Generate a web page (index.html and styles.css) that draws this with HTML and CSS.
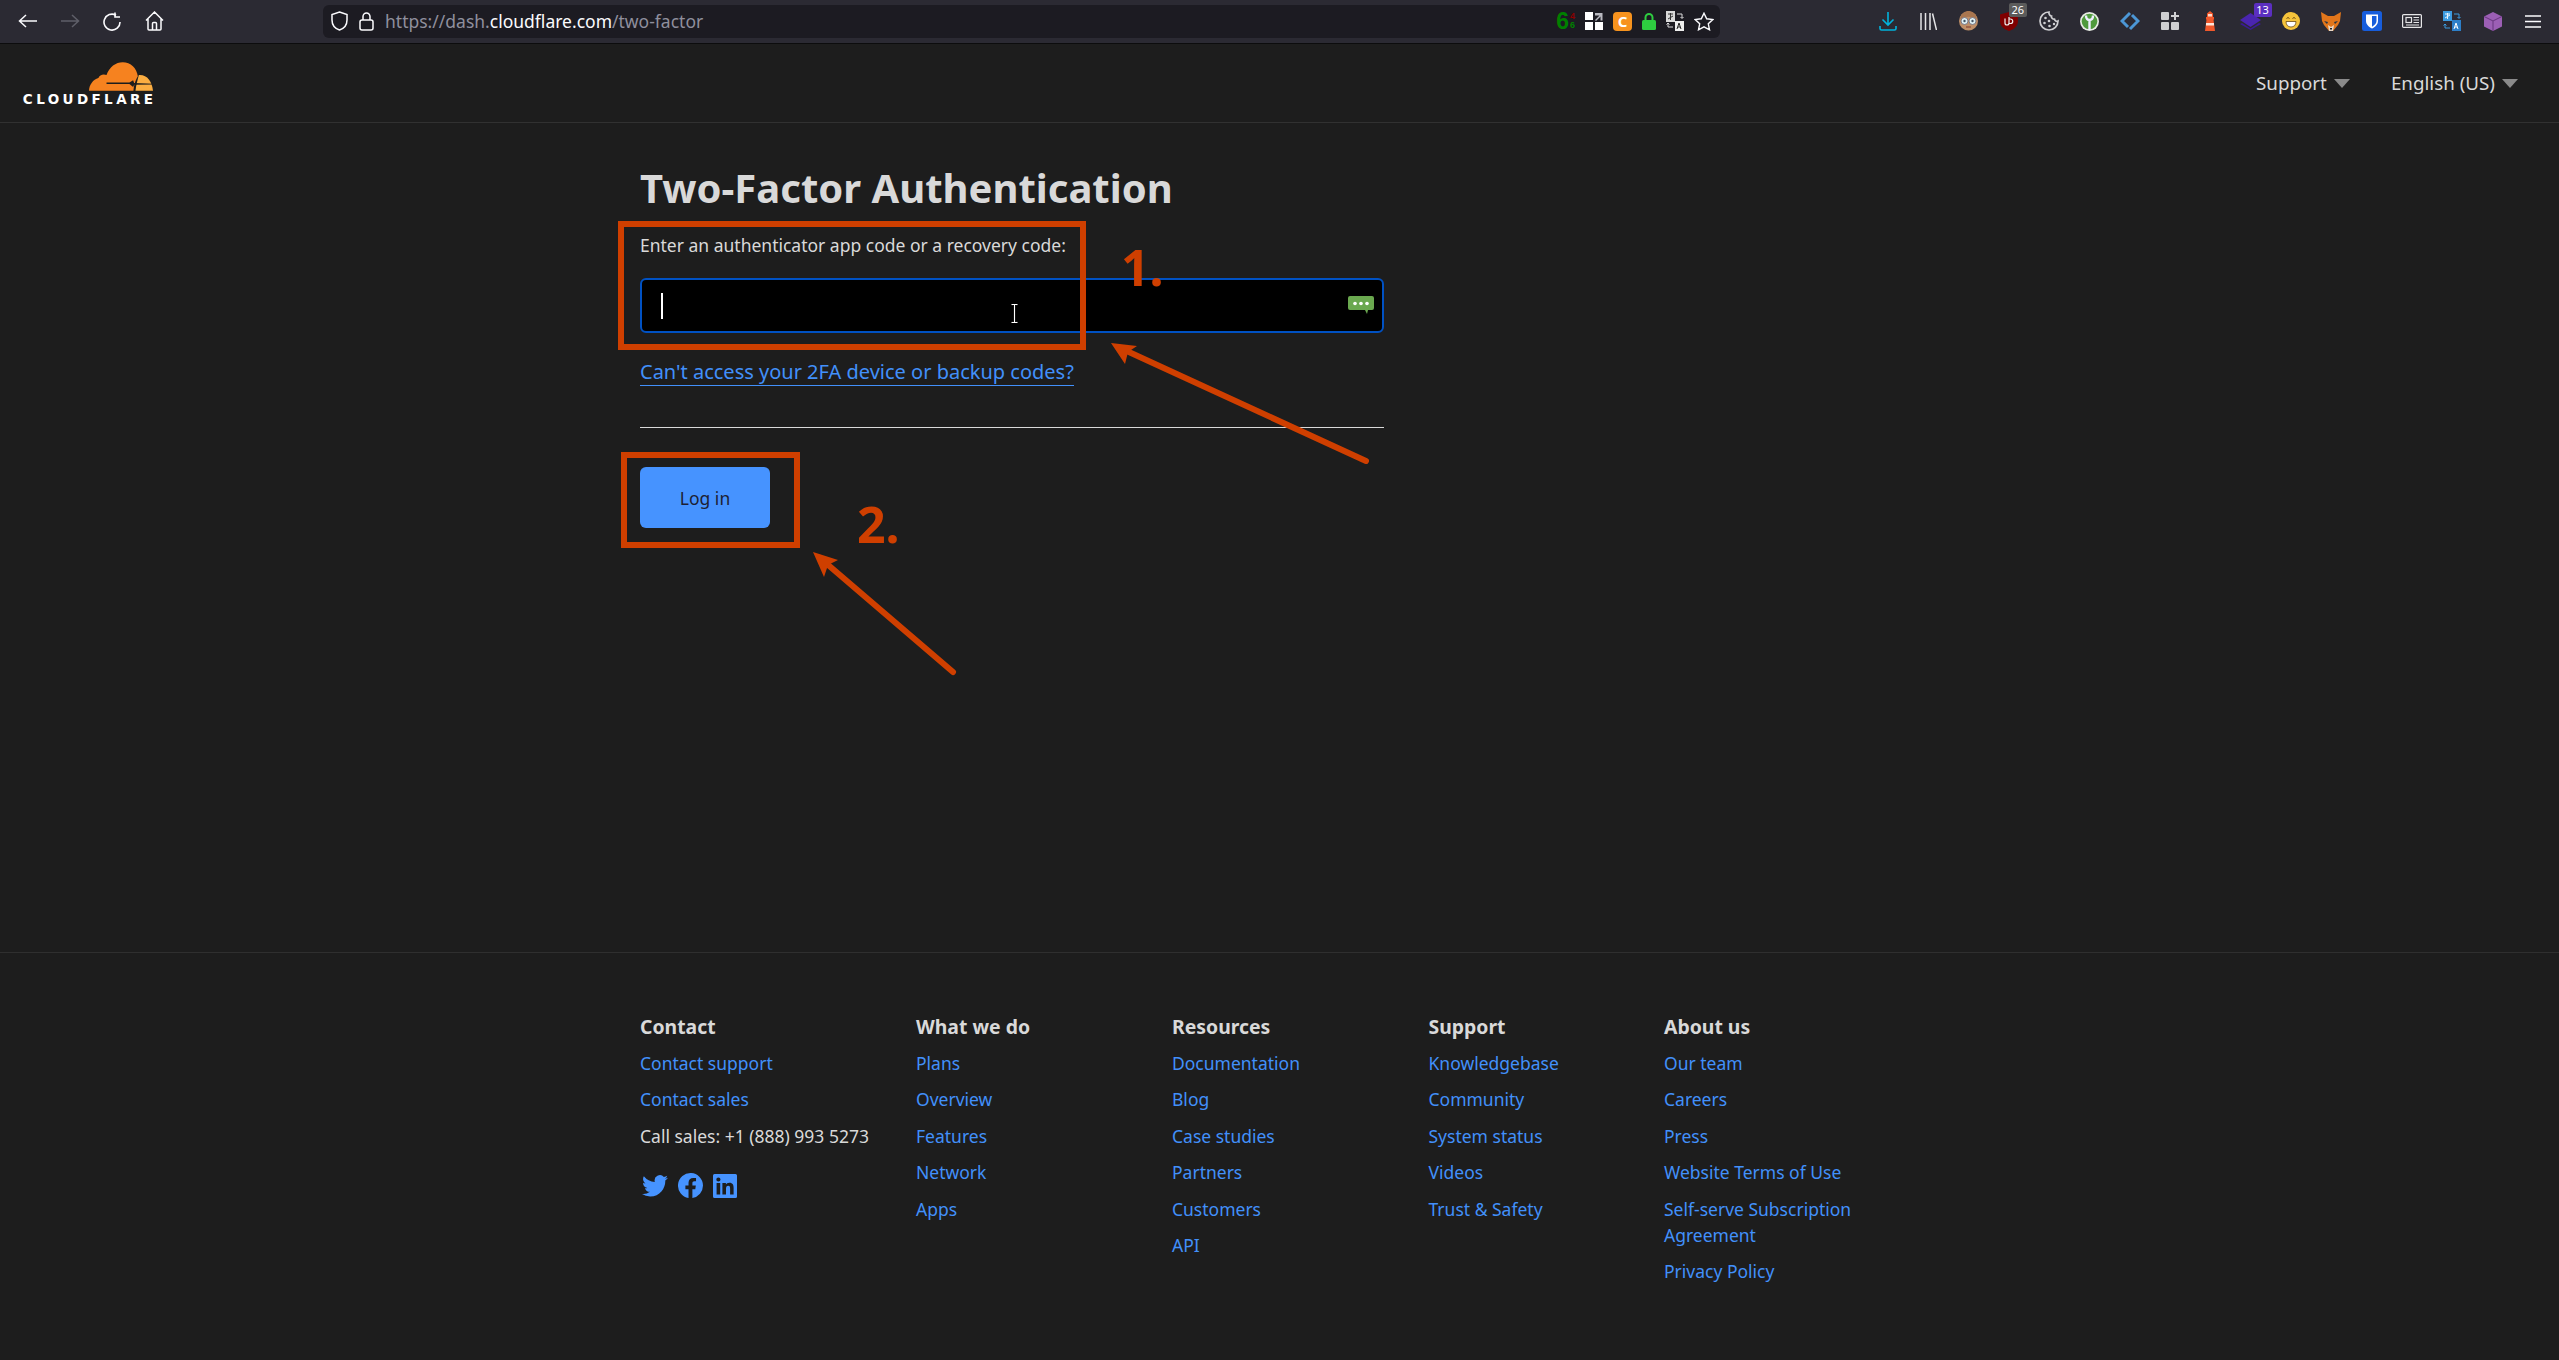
FILE: index.html
```html
<!DOCTYPE html>
<html lang="en">
<head>
    <meta charset="UTF-8">
    <title>Cloudflare - Two-Factor Authentication</title>
    <link rel="stylesheet" href="styles.css">
</head>

<body>
    <!-- Browser toolbar -->
    <div class="toolbar">
        <div class="nav-btns">
            <span class="slot"><svg width="20" height="14" viewBox="0 0 20 14" fill="none" stroke="#fbfbfe" stroke-width="1.5"><path d="M8 1 1.5 7 8 13M1.5 7H19"/></svg></span>
            <span class="slot"><svg width="20" height="14" viewBox="0 0 20 14" fill="none" stroke="#5f5f69" stroke-width="1.5"><path d="M12 1 18.5 7 12 13M18.5 7H1"/></svg></span>
            <span class="slot"><svg width="20" height="19" viewBox="0 0 20 19" fill="none" stroke="#fbfbfe" stroke-width="1.6"><path d="M14 3.2A8 8 0 1 0 18 10"/><path d="M13 .5V5H18" stroke-width="1.6"/></svg></span>
            <span class="slot"><svg width="19" height="20" viewBox="0 0 19 20" fill="none" stroke="#fbfbfe" stroke-width="1.5"><path d="M1 9.5 9.5 1 18 9.5M3 8V18a1 1 0 0 0 1 1H15a1 1 0 0 0 1-1V8M7.5 19V12.5a1 1 0 0 1 1-1H10.500a1 1 0 0 1 1 1V19"/></svg></span>
        </div>

        <div class="urlbar">
            <svg class="url-shield" width="17" height="20" viewBox="0 0 17 20" fill="none" stroke="#fbfbfe" stroke-width="1.5"><path d="M8.500 1 16 3.500V9c0 5-3 8.500-7.500 10C4 17.500 1 14 1 9V3.500Z"/></svg>
            <svg class="url-lock" width="15" height="19" viewBox="0 0 15 19" fill="none" stroke="#fbfbfe" stroke-width="1.5"><rect x="1" y="8" width="13" height="10" rx="2"/><path d="M4 8V4.500a3.500 3.500 0 0 1 7 0V8"/></svg>
            <span class="url-text">https://dash.<b>cloudflare.com</b>/two-factor</span>
            <div class="url-actions">
                <span class="site-score">6<span class="score-small"><i>4</i><i>6</i></span></span>
                <svg width="18" height="18" viewBox="0 0 18 18" fill="#fff"><rect width="8" height="8"/><rect y="10" width="8" height="8"/><rect x="10" y="10" width="8" height="8"/><path d="M10 1h7.500v7.500h-2V4.500L11 9 10 8l4.500-4.500H10Z" fill="#b9b9c0"/></svg>
                <span class="c-badge">C</span>
                <svg width="14" height="17" viewBox="0 0 14 17"><path d="M3.500 8V4.500a3.500 3.500 0 0 1 7 0V8" fill="none" stroke="#2ecc40" stroke-width="2"/><rect y="7" width="14" height="10" rx="1.500" fill="#2ecc40"/></svg>
                <svg width="18" height="20" viewBox="0 0 18 20"><rect width="9" height="11" fill="#d8d8d8"/><rect x="9" y="10" width="9" height="10" fill="#eee"/><path d="M2 3h5M4.500 2v7M2 8l5-3" stroke="#333" fill="none"/><path d="M11 18l2-6 2 6M12 16h2" stroke="#222" fill="none"/><path d="M11 3h5v4M14.500 6l1.500 1.500L17.500 6M7 16H2v-4M.5 13.500 2 12l1.500 1.500" stroke="#ddd" fill="none"/></svg>
                <svg width="20" height="19" viewBox="0 0 20 19" fill="none" stroke="#fbfbfe" stroke-width="1.4"><path d="M10 1.200 12.700 6.800 18.800 7.600 14.300 11.800 15.500 17.800 10 14.900 4.500 17.800 5.700 11.800 1.200 7.600 7.300 6.800Z"/></svg>
            </div>
        </div>

        <div class="ext-icons">
            <span class="slot"><svg width="18" height="19" viewBox="0 0 18 19" fill="none" stroke="#00b3dc" stroke-width="1.600"><path d="M9 0V13M3.500 7.500 9 13l5.500-5.500M1 14v2.500A1.500 1.500 0 0 0 2.500 18h13a1.500 1.500 0 0 0 1.500-1.500V14"/></svg></span>
            <span class="slot"><svg width="17" height="17" viewBox="0 0 17 17" fill="none" stroke="#e4e4e6" stroke-width="1.500"><path d="M1 0V17M5.500 0V17M10 0V17M12.500 .5 16.500 17"/></svg></span>
            <span class="slot"><svg width="19" height="20" viewBox="0 0 19 20"><circle cx="9.500" cy="10" r="9.500" fill="#bf8f68"/><path d="M1 8C2 2 6 0 9.500 0S17 2 18 8C13 5 6 5 1 8Z" fill="#a9764f"/><circle cx="5.500" cy="10" r="3.500" fill="#dff0f4" stroke="#667" stroke-width=".8"/><circle cx="13.500" cy="10" r="3.500" fill="#dff0f4" stroke="#667" stroke-width=".8"/><circle cx="5.500" cy="10" r="1.200" fill="#456"/><circle cx="13.500" cy="10" r="1.200" fill="#456"/><path d="M7 16h5" stroke="#8a4a3a" stroke-width="1.200"/></svg></span>
            <span class="slot"><svg width="18" height="19" viewBox="0 0 18 19"><path d="M9 0 18 2.500V9c0 5-4 8.500-9 10-5-1.500-9-5-9-10V2.500Z" fill="#800000"/><path d="M5 6.500V11a2 2 0 0 0 4 0V6.500M9 5v6.500h1.500a2.200 2.200 0 0 0 0-4.500H9" fill="none" stroke="#eee" stroke-width="1.200"/></svg><span class="badge badge-grey">26</span></span>
            <span class="slot"><svg width="20" height="20" viewBox="0 0 20 20" fill="none" stroke="#cfcfd2" stroke-width="1.700"><path d="M10 1a9 9 0 1 0 9 9c-1.500.8-3.200-.2-3.500-1.800C14 8.500 12 7 12.500 5.200 11 5 9.500 3 10 1Z"/><g fill="#cfcfd2" stroke="none"><circle cx="6.500" cy="7" r="1.300"/><circle cx="5.500" cy="12" r="1.300"/><circle cx="10" cy="10" r="1.300"/><circle cx="10.500" cy="15" r="1.300"/><circle cx="15" cy="13" r="1.200"/></g></svg></span>
            <span class="slot"><svg width="19" height="19" viewBox="0 0 19 19"><circle cx="9.500" cy="9.500" r="9.500" fill="#e8ece4"/><circle cx="9.500" cy="9.500" r="7.800" fill="#4f9a3c"/><path d="M6 3.500C6 7 8 8 9.500 8S13 7 13 3.500M9.500 8V18" fill="none" stroke="#eef" stroke-width="2.400"/></svg></span>
            <span class="slot"><svg width="20" height="20" viewBox="0 0 20 20" fill="none" stroke="#4c97d6" stroke-width="3"><path d="M10 2 2 10l6 6M10 18l8-8-6-6"/></svg></span>
            <span class="slot"><svg width="18" height="18" viewBox="0 0 18 18" fill="#cfcfd2"><rect width="8" height="8" rx="1"/><rect y="10" width="8" height="8" rx="1"/><rect x="10" y="10" width="8" height="8" rx="1"/><path d="M13 0h2v3h3v2h-3v3h-2V5h-3V3h3Z"/></svg></span>
            <span class="slot"><svg width="14" height="20" viewBox="0 0 14 20"><path d="M7 0 10 2.500V6H11V8.500H10.500L12 20H2L3.500 8.500H3V6H4V2.500Z" fill="#f1582b"/><rect x="5" y="3" width="4" height="2.500" fill="#ffd9c9"/><rect x="3" y="12" width="8" height="2.500" fill="#ffe6da"/></svg></span>
            <span class="slot"><svg width="21" height="17" viewBox="0 0 21 17" fill="#3b1a96"><path d="M10.500 0 21 7 10.500 14 0 7Z" fill="#4a25b0"/><path d="M2 10 10.500 15.500 19 10 21 11 10.500 17 0 11Z"/></svg><span class="badge badge-purple">13</span></span>
            <span class="slot"><svg width="18" height="18" viewBox="0 0 18 18"><circle cx="9" cy="9" r="9" fill="#f5c33b"/><path d="M4 9.500H14C14 13 12 15 9 15S4 13 4 9.500Z" fill="#fff" stroke="#6b4a12" stroke-width=".8"/><path d="M4.500 6.500Q6 4.500 7.500 6.500M10.500 6.500Q12 4.500 13.500 6.500" fill="none" stroke="#6b4a12" stroke-width="1"/></svg></span>
            <span class="slot"><svg width="20" height="19" viewBox="0 0 20 19"><path d="M0 0 7 4H13L20 0 19 9 17 13 12 19H8L3 13 1 9Z" fill="#e2761b"/><path d="M7 13 10 15 13 13 12 19H8Z" fill="#e8d8c8"/><path d="M3 9 7 10 6 12ZM17 9 13 10 14 12Z" fill="#233447"/><path d="M9 16h2v1.500H9Z" fill="#222"/></svg></span>
            <span class="slot"><svg width="20" height="20" viewBox="0 0 20 20"><rect width="20" height="20" rx="2.500" fill="#175ddc"/><path d="M4 3.500H16V10C16 13.500 13 16 10 17.500 7 16 4 13.500 4 10Z" fill="#fff"/><path d="M10 5H14.500V10C14.500 12.500 12.500 14.200 10 15.700Z" fill="#175ddc"/></svg></span>
            <span class="slot"><svg width="20" height="14" viewBox="0 0 20 14" fill="none" stroke="#e6e6e8" stroke-width="1.200"><rect x=".6" y=".6" width="18.800" height="12.800" rx="1"/><rect x="4" y="3.500" width="5.500" height="5" /><path d="M11.500 3.500H17M11.500 6H17M11.500 8.500H17M4 11H17"/></svg></span>
            <span class="slot"><svg width="18" height="20" viewBox="0 0 18 20"><rect width="9" height="10" fill="#3c9be0"/><rect x="9" y="9" width="9" height="11" fill="#2d7fc9"/><path d="M2 3h5M4.500 2v6M2 7l5-3" stroke="#e8f4ff" fill="none"/><path d="M11 18l2-6 2 6M12 16h2" stroke="#fff" fill="none"/><path d="M11 3h5v4M14.500 6l1.500 1.500L17.500 6M7 17H2v-4M.5 14.500 2 13l1.500 1.500" stroke="#3c9be0" fill="none"/></svg></span>
            <span class="slot"><svg width="18" height="19" viewBox="0 0 18 19"><path d="M9 0 18 4.500V14.500L9 19 0 14.500V4.500Z" fill="#9c5fb5"/><path d="M0 4.500 9 9 18 4.500M9 9V19" fill="none" stroke="#6c3a82" stroke-width="1.100"/></svg></span>
            <span class="slot"><svg width="16" height="13" viewBox="0 0 16 13" fill="none" stroke="#fbfbfe" stroke-width="1.500"><path d="M0 1H16M0 6.500H16M0 12H16"/></svg></span>
        </div>
    </div>

    <!-- Dashboard header -->
    <header class="topbar">
        <a class="logo" href="#">
            <svg class="logo-cloud" width="64" height="29" viewBox="0 0 190 85">
                <path d="M0 85C1 66 12 52 28 47 31 38 42 34 52 38 60 14 80 0 100 0 124 0 142 18 145 42 140 52 134 62 132 85Z" fill="#f6821f"/>
                <path d="M148 38C172 36 187 56 190 85H138C140 68 144 52 148 38Z" fill="#fbad41"/>
                <path d="M52 60H120L131 54 134 62 190 64V66L134 67 131 74 120 65H52Z" fill="#1d1d1d"/>
            </svg>
            <span class="logo-word">CLOUDFLARE</span>
        </a>
        <nav class="topbar-menu">
            <a href="#">Support<span class="caret-down"></span></a>
            <a href="#">English (US)<span class="caret-down"></span></a>
        </nav>
    </header>

    <!-- Login form -->
    <main class="content">
        <h1>Two-Factor Authentication</h1>
        <form class="twofa-form">
            <label for="code">Enter an authenticator app code or a recovery code:</label>
            <div class="input-wrap">
                <input id="code" type="text">
                <span class="text-caret"></span>
                <svg class="ibeam" width="7" height="19" viewBox="0 0 7 19" fill="none" stroke="#fff" stroke-width="1"><path d="M.5 .5H6.500M.5 18.500H6.500M3.500 .5V18.500" stroke="#111" stroke-width="3"/><path d="M.5 .5H6.500M.5 18.500H6.500M3.500 .5V18.500"/></svg>
                <svg class="pw-icon" width="26" height="18" viewBox="0 0 26 18"><path d="M2 0H24a2 2 0 0 1 2 2V12a2 2 0 0 1-2 2H20L19 18 17 14H2a2 2 0 0 1-2-2V2A2 2 0 0 1 2 0Z" fill="#6aa84f"/><g fill="#fff"><circle cx="7" cy="7.500" r="1.800"/><circle cx="13" cy="7.500" r="1.800"/><circle cx="19" cy="7.500" r="1.800"/></g></svg>
            </div>
            <a class="help-link" href="#">Can't access your 2FA device or backup codes?</a>
            <hr>
            <button class="login-btn" type="button">Log in</button>
        </form>
    </main>

    <!-- Footer -->
    <footer class="site-footer">
        <div class="footer-cols">
            <div>
                <h3>Contact</h3>
                <ul>
                    <li><a href="#">Contact support</a></li>
                    <li><a href="#">Contact sales</a></li>
                    <li>Call sales: +1 (888) 993 5273</li>
                </ul>
                <div class="social">
                    <svg width="26" height="22" viewBox="0 0 24 20" fill="#4693ff"><path d="M24 2.400a10 10 0 0 1-2.800.8A5 5 0 0 0 23.300.500a10 10 0 0 1-3.100 1.200A4.900 4.900 0 0 0 11.800 6.200 14 14 0 0 1 1.700 1 4.900 4.900 0 0 0 3.200 7.600 4.900 4.900 0 0 1 1 7v.100A4.900 4.900 0 0 0 4.900 11.900a5 5 0 0 1-2.200.1A4.900 4.900 0 0 0 7.300 15.400 9.900 9.900 0 0 1 0 17.400 14 14 0 0 0 7.500 19.600C16.600 19.600 21.500 12 21.500 5.500V4.900A10 10 0 0 0 24 2.400Z"/></svg>
                    <svg width="25" height="25" viewBox="0 0 24 24" fill="#4693ff"><path d="M24 12a12 12 0 1 0-13.900 11.900V15.500H7.100V12h3V9.400c0-3 1.800-4.700 4.500-4.700 1.300 0 2.700.2 2.700.2v3h-1.500c-1.500 0-2 .9-2 1.900V12h3.300l-.5 3.500h-2.800v8.400A12 12 0 0 0 24 12Z"/></svg>
                    <svg width="24" height="24" viewBox="0 0 24 24" fill="#4693ff"><path d="M1.500 0H22.500A1.500 1.500 0 0 1 24 1.500V22.500A1.500 1.500 0 0 1 22.500 24H1.500A1.500 1.500 0 0 1 0 22.500V1.500A1.500 1.500 0 0 1 1.500 0ZM3.600 9V20.400H7.200V9ZM5.400 3.400a2.100 2.100 0 1 0 0 4.200 2.100 2.100 0 0 0 0-4.200ZM9.400 9V20.400H13V14.700c0-1.500.3-3 2.200-3s1.900 1.700 1.900 3.100v5.600h3.500V14.100c0-3.100-.7-5.400-4.300-5.400-1.700 0-2.900.9-3.400 1.800V9Z"/></svg>
                </div>
            </div>
            <div>
                <h3>What we do</h3>
                <ul>
                    <li><a href="#">Plans</a></li>
                    <li><a href="#">Overview</a></li>
                    <li><a href="#">Features</a></li>
                    <li><a href="#">Network</a></li>
                    <li><a href="#">Apps</a></li>
                </ul>
            </div>
            <div>
                <h3>Resources</h3>
                <ul>
                    <li><a href="#">Documentation</a></li>
                    <li><a href="#">Blog</a></li>
                    <li><a href="#">Case studies</a></li>
                    <li><a href="#">Partners</a></li>
                    <li><a href="#">Customers</a></li>
                    <li><a href="#">API</a></li>
                </ul>
            </div>
            <div>
                <h3>Support</h3>
                <ul>
                    <li><a href="#">Knowledgebase</a></li>
                    <li><a href="#">Community</a></li>
                    <li><a href="#">System status</a></li>
                    <li><a href="#">Videos</a></li>
                    <li><a href="#">Trust &amp; Safety</a></li>
                </ul>
            </div>
            <div>
                <h3>About us</h3>
                <ul>
                    <li><a href="#">Our team</a></li>
                    <li><a href="#">Careers</a></li>
                    <li><a href="#">Press</a></li>
                    <li><a href="#">Website Terms of Use</a></li>
                    <li><a href="#">Self-serve Subscription Agreement</a></li>
                    <li><a href="#">Privacy Policy</a></li>
                </ul>
            </div>
        </div>
    </footer>

    <!-- Red annotations drawn over the page -->
    <div class="mark mark-one"></div>
    <div class="mark mark-two"></div>
    <div class="mark-num num-one">1.</div>
    <div class="mark-num num-two">2.</div>
    <svg class="mark-arrows" width="2559" height="1360" viewBox="0 0 2559 1360">
        <path d="M1366 461 1118 347" stroke="#cf3f00" stroke-width="6" stroke-linecap="round"/>
        <path d="M1111 343 1137 346 1128 352 1125 364Z" fill="#cf3f00"/>
        <path d="M953 672 820 558" stroke="#cf3f00" stroke-width="6" stroke-linecap="round"/>
        <path d="M813 552 838 560 828 565 824 577Z" fill="#cf3f00"/>
    </svg>
</body>
</html>
```

FILE: styles.css
```css
/* Reset */
* {
    margin: 0;
    padding: 0;
    box-sizing: border-box;
}

body {
    position: relative;
    font-family: "Noto Sans", sans-serif;
    font-size: 17.5px;
    line-height: 1.5;
    background-color: #1d1d1d;
    color: #d9d9d9;
    min-height: 1360px;
    overflow: hidden;
}

a {
    color: #4290fa;
    text-decoration: none;
}

ul {
    list-style: none;
}

/* Browser toolbar */
.toolbar {
    display: flex;
    align-items: center;
    height: 44px;
    padding: 0 6px 1px 7px;
    background-color: #2b2a33;
    border-bottom: 1px solid #0c0c0d;
}

.nav-btns {
    display: flex;
    width: 167px;
}

.nav-btns .slot {
    flex: none;
    width: 42.200px;
}

.slot {
    position: relative;
    display: flex;
    align-items: center;
    justify-content: center;
    height: 34px;
}

.urlbar {
    display: flex;
    align-items: center;
    width: 1397px;
    height: 33px;
    margin-left: 149px;
    padding: 0 6px 0 8px;
    background-color: #1c1b22;
    border-radius: 6px;
}

.url-lock {
    margin-left: 11px;
}

.url-text {
    margin-left: 11px;
    font-size: 17.500px;
    line-height: 33px;
    color: #8f8f9d;
    white-space: nowrap;
}

.url-text b {
    font-weight: 400;
    color: #fbfbfe;
}

.url-actions {
    display: flex;
    align-items: center;
    gap: 10px;
    margin-left: auto;
}

.site-score {
    display: flex;
    align-items: center;
    font-family: "Liberation Sans", sans-serif;
    font-size: 23px;
    font-weight: bold;
    line-height: 1;
    color: #008000;
}

.score-small {
    display: flex;
    flex-direction: column;
    margin-left: 1px;
    font-size: 9px;
}

.score-small i {
    font-style: normal;
}

.score-small i:first-child {
    color: #8b0000;
}

.c-badge {
    width: 19px;
    height: 19px;
    font-size: 15px;
    font-weight: bold;
    line-height: 19px;
    text-align: center;
    color: #fff;
    background-color: #f7931e;
    border-radius: 4px;
}

.ext-icons {
    display: flex;
    margin-left: auto;
}

.ext-icons .slot {
    width: 40.300px;
}

.badge {
    position: absolute;
    top: -1px;
    left: 20px;
    width: 18px;
    height: 14px;
    font-size: 11px;
    line-height: 14px;
    text-align: center;
    color: #fff;
    border-radius: 2px;
}

.badge-grey {
    background-color: #5b5b5b;
}

.badge-purple {
    left: 23px;
    background-color: #5b2fc0;
}

/* Dashboard header */
.topbar {
    display: flex;
    justify-content: space-between;
    align-items: center;
    height: 79px;
    padding: 0 41px 0 21px;
    border-bottom: 1px solid #313131;
}

.logo {
    display: flex;
    flex-direction: column;
    align-items: flex-end;
    width: 132px;
    margin-top: 2px;
}

.logo-word {
    font-family: "DejaVu Sans", sans-serif;
    font-size: 13.500px;
    font-weight: 700;
    line-height: 16px;
    letter-spacing: 3.400px;
    margin-right: -3.400px;
    color: #fff;
    white-space: nowrap;
}

.topbar-menu {
    display: flex;
    gap: 41px;
    font-size: 18.800px;
}

.topbar-menu a {
    display: flex;
    align-items: center;
    color: #d9d9d9;
}

.caret-down {
    width: 0;
    height: 0;
    margin-left: 7px;
    border-left: 8px solid transparent;
    border-right: 8px solid transparent;
    border-top: 9px solid #8a8a8a;
}

/* Login form */
.content {
    width: 1279px;
    height: 829px;
    margin: 0 auto;
    padding-top: 39px;
}

h1 {
    font-size: 40px;
    font-weight: 700;
    line-height: 52px;
}

.twofa-form {
    display: flex;
    flex-direction: column;
    align-items: flex-start;
    width: 744px;
    margin-top: 18px;
}

.input-wrap {
    position: relative;
    width: 100%;
    height: 55px;
    margin-top: 20px;
}

.input-wrap input {
    display: block;
    width: 100%;
    height: 100%;
    background-color: #000;
    border: 2px solid #0051c3;
    border-radius: 6px;
    outline: none;
}

.text-caret {
    position: absolute;
    top: 15px;
    left: 21px;
    width: 2px;
    height: 26px;
    background-color: #fff;
}

.ibeam {
    position: absolute;
    top: 26px;
    left: 371px;
}

.pw-icon {
    position: absolute;
    top: 18px;
    right: 10px;
}

.help-link {
    margin-top: 26px;
    font-size: 20px;
    line-height: 26px;
    border-bottom: 1px solid #4290fa;
}

hr {
    width: 100%;
    margin-top: 41px;
    border: none;
    border-top: 1px solid #d9d9d9;
}

.login-btn {
    width: 130px;
    height: 61px;
    margin-top: 39px;
    font-family: inherit;
    font-size: 17.500px;
    color: #1d1f33;
    background-color: #4693ff;
    border: none;
    border-radius: 6px;
}

/* Footer */
.site-footer {
    border-top: 1px solid #2f2f2f;
}

.footer-cols {
    display: grid;
    grid-template-columns: 276px 256px 256.500px 235.500px 255px;
    width: 1279px;
    margin: 0 auto;
    padding-top: 61px;
}

.footer-cols h3 {
    font-size: 19.400px;
    font-weight: 700;
    line-height: 26px;
    margin-bottom: 10px;
}

.footer-cols li {
    margin-bottom: 10px;
    line-height: 26.400px;
}

.social {
    display: flex;
    align-items: center;
    gap: 10px;
    margin: 24px 0 0 2px;
}

/* Red annotations */
.mark {
    position: absolute;
    border: 6px solid #cf3f00;
}

.mark-one {
    top: 221px;
    left: 618px;
    width: 468px;
    height: 129px;
}

.mark-two {
    top: 452px;
    left: 621px;
    width: 179px;
    height: 96px;
}

.mark-num {
    position: absolute;
    font-size: 50px;
    font-weight: 700;
    line-height: 50px;
    color: #cf3f00;
}

.num-one {
    top: 242px;
    left: 1121px;
}

.num-two {
    top: 499px;
    left: 857px;
}

.mark-arrows {
    position: absolute;
    top: 0;
    left: 0;
    pointer-events: none;
}
```
